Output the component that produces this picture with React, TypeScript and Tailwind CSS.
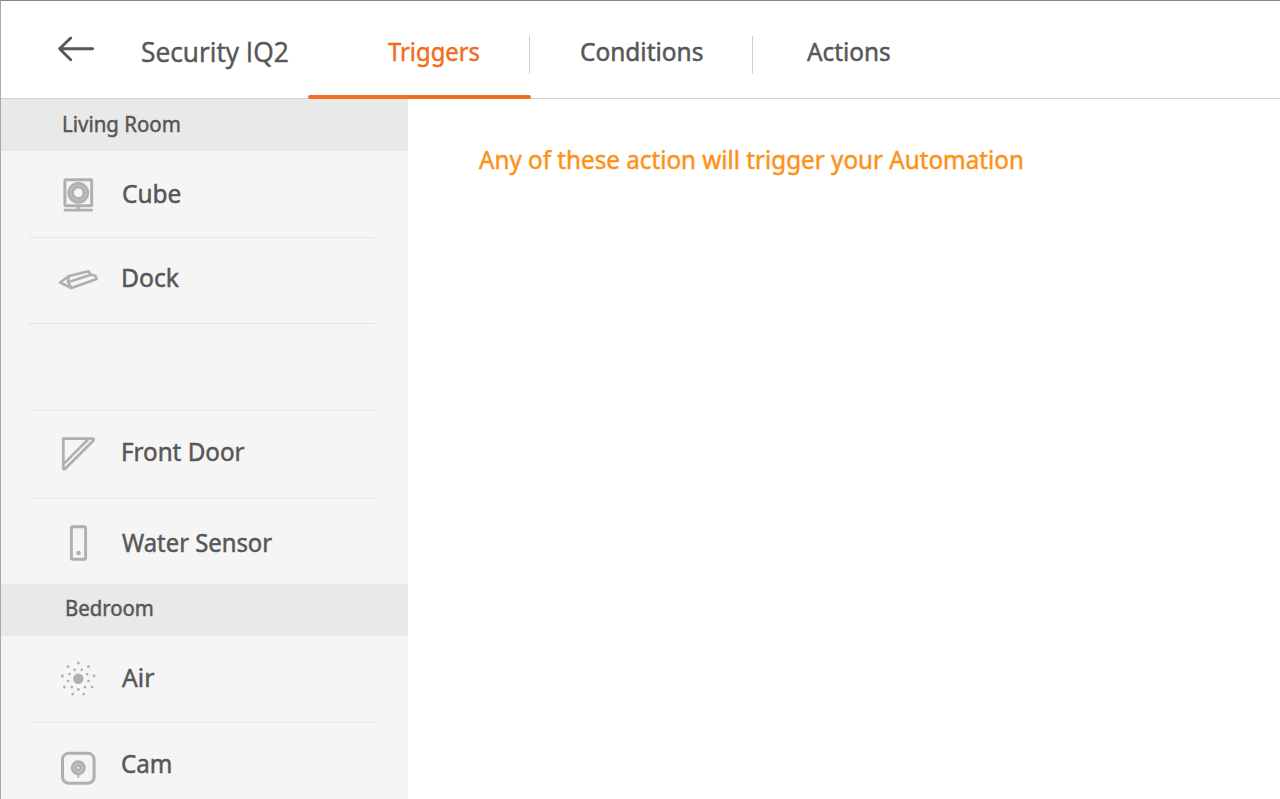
import type { ReactNode } from "react";

const INK = "#b0b0b0";

function CubeIcon() {
  return (
    <svg className="h-11 w-11" viewBox="56 173 44 44" fill="none" stroke={INK}>
      <rect x="64.9" y="179.8" width="26.8" height="26" rx="0.8" strokeWidth="3" />
      <circle cx="78.3" cy="192.8" r="7.6" stroke="#c4c4c4" strokeWidth="6" />
      <circle cx="78.3" cy="192.8" r="9.5" strokeWidth="2.7" />
      <circle cx="78.3" cy="192.8" r="5.8" strokeWidth="2.7" />
      <path d="M78.3 206v4" strokeWidth="3" />
      <path d="M65 210.2h26.6" strokeWidth="2.7" strokeLinecap="round" />
    </svg>
  );
}

function DockIcon() {
  return (
    <svg className="h-11 w-11" viewBox="56 257 44 44" fill="none" stroke={INK} strokeWidth="2.6" strokeLinejoin="round" strokeLinecap="round">
      <path d="M60 282.5L69 276L88.4 271.2L91 274.8L95.4 275.8L96.6 279L71.5 288Z" />
      <path d="M69 276L67.8 281.8L71.5 288" />
      <path d="M68.6 282L91 274.8" />
    </svg>
  );
}

function DoorIcon() {
  return (
    <svg className="h-11 w-11" viewBox="56 432 44 44" fill="none" stroke={INK} strokeWidth="2.8" strokeLinejoin="round">
      <path d="M63.3 438.7H92.4Q94.6 438.8 93.2 440.7L65.2 468.8Q63.4 469.9 63.3 468Z" />
      <path d="M88 439.5L64 463.6" strokeWidth="2.6" />
    </svg>
  );
}

function WaterIcon() {
  return (
    <svg className="h-11 w-11" viewBox="56 521 44 44" fill="none" stroke={INK}>
      <rect x="71.4" y="526.8" width="14.2" height="32.5" rx="1.2" strokeWidth="2.9" />
      <circle cx="78.6" cy="553" r="2.3" fill={INK} stroke="none" />
    </svg>
  );
}

const OUTER_DOTS = [[78.3, 663], [68, 666.7], [88.4, 666.7], [62.4, 676], [94.1, 676], [64.4, 687.1], [92.1, 687.1], [72.7, 694.1], [83.7, 694.1]];
const INNER_DOTS = [[74.7, 669.8], [81.8, 669.8], [69.4, 674.1], [87.1, 674.1], [68.1, 681], [88.4, 681], [71.8, 687.1], [85, 687.1], [78.3, 689.4]];

function AirIcon() {
  return (
    <svg className="h-11 w-11" viewBox="56 657 44 44" fill={INK}>
      <circle cx="78.3" cy="678.8" r="5.2" />
      {OUTER_DOTS.map(([x, y]) => <circle key={`${x}-${y}`} cx={x} cy={y} r="1.4" />)}
      {INNER_DOTS.map(([x, y]) => <circle key={`${x}-${y}`} cx={x} cy={y} r="1.35" />)}
    </svg>
  );
}

function CamIcon() {
  return (
    <svg className="h-11 w-11" viewBox="56 745 44 44" fill="none" stroke={INK}>
      <rect x="62.5" y="753.2" width="31.6" height="30" rx="6.3" strokeWidth="3" />
      <circle cx="78.3" cy="767.8" r="7.5" fill={INK} stroke="none" />
      <circle cx="78.3" cy="767.8" r="4.2" stroke="#d6d6d6" strokeWidth="0.8" />
      <circle cx="78.3" cy="767.8" r="1.1" fill="#f5f5f5" stroke="none" />
      <path d="M78.3 774v3" strokeWidth="1.8" strokeLinecap="round" />
    </svg>
  );
}

function Row({ row, icon, label, text }: { row: string; icon?: ReactNode; label?: string; text?: string }) {
  return (
    <div className={`ml-7 flex w-[346px] items-start pl-[27px] ${row}`}>
      {icon}
      {label && <span className={`origin-left whitespace-nowrap leading-9 ${text}`}>{label}</span>}
    </div>
  );
}

export default function App() {
  return (
    <div className="flex h-[799px] w-full flex-col overflow-hidden border-l border-t border-l-[#a9a9a9] border-t-[#858585] bg-white font-['Noto_Sans','Open_Sans',sans-serif] text-[26px] text-[#575757] [-webkit-text-stroke:0.5px_currentColor]">
      <header className="z-10 flex h-[98px] shrink-0 items-start border-b border-[#d0d0d0]">
        <button className="ml-[53px] mt-[31px] h-9 w-[44px]" aria-label="Back">
          <svg className="h-9 w-[44px]" viewBox="54 32 44 36" fill="none" stroke="#575757" strokeWidth="2.9" strokeLinecap="round" strokeLinejoin="round">
            <path d="M59.6 48.8H92.6M70.7 38L59.6 48.8L70.7 59.7" />
          </svg>
        </button>
        <h1 className="ml-[43px] mt-[31px] w-[167px] whitespace-nowrap font-['Open_Sans','Noto_Sans',sans-serif] text-[27.5px] leading-10"><span className="inline-block origin-left scale-x-[0.958]">Security IQ2</span></h1>
        <nav className="flex h-full">
          <div className="relative flex h-full w-[222px] items-start pl-[80px] pt-[32px] text-[#f26c21]">
            <span className="origin-left scale-x-[0.915] leading-9">Triggers</span>
            <i className="absolute right-0 top-[35px] h-[38px] w-px bg-[#d0d0d0]" />
            <i className="absolute -bottom-px left-0 h-1 w-[223px] rounded-full bg-[#f26c21]" />
          </div>
          <div className="flex h-full w-[223px] items-start pl-[50px] pt-[32px]">
            <span className="w-[173px] shrink-0 origin-left scale-x-[0.94] leading-9">Conditions</span>
            <i className="-ml-px mt-[3px] h-[38px] w-px shrink-0 bg-[#d0d0d0]" />
          </div>
          <div className="flex h-full items-start pl-[54px] pt-[32px]">
            <span className="origin-left scale-x-[0.935] leading-9">Actions</span>
          </div>
        </nav>
      </header>
      <div className="flex min-h-0 flex-1">
        <aside className="w-[407px] shrink-0 overflow-hidden bg-[#f5f5f5]">
          <h2 className="h-[52px] bg-[#e9e9e9] pl-[61px] pt-[8px] text-[22px] leading-8"><span className="inline-block origin-left scale-x-[0.93]">Living Room</span></h2>
          <Row row="h-[87px] border-b border-[#e5e5e5] pt-[22px]" icon={<CubeIcon />} label="Cube" text="ml-[21.5px] mt-[2px] scale-x-[0.94]" />
          <Row row="h-[86px] border-b border-[#e3e3e3] pt-[19px]" icon={<DockIcon />} label="Dock" text="ml-[21px] mt-[2px] scale-x-[0.95]" />
          <Row row="h-[87px] border-b border-[#e8e8e8]" />
          <Row row="h-[88px] border-b border-[#e8e8e8] pt-[21px]" icon={<DoorIcon />} label="Front Door" text="ml-[21px] mt-[1px] scale-x-[0.93]" />
          <Row row="h-[85px] pt-[22px]" icon={<WaterIcon />} label="Water Sensor" text="ml-[22px] mt-[3px] scale-x-[0.917]" />
          <h2 className="h-[52px] bg-[#e9e9e9] pl-[64px] pt-[7px] text-[22px] leading-8"><span className="inline-block origin-left scale-x-[0.925]">Bedroom</span></h2>
          <Row row="h-[87px] border-b border-[#e8e8e8] pt-[21px]" icon={<AirIcon />} label="Air" text="ml-[22px] mt-[2px] scale-x-[0.95]" />
          <Row row="h-[87px] pt-[22px]" icon={<CamIcon />} label="Cam" text="ml-[21px] scale-x-[0.93]" />
        </aside>
        <main className="flex-1 pl-[70.5px] pt-[42px] text-[#fd9218]">
          <p className="origin-left scale-x-[0.931] whitespace-nowrap leading-9">Any of these action will trigger your Automation</p>
        </main>
      </div>
    </div>
  );
}
